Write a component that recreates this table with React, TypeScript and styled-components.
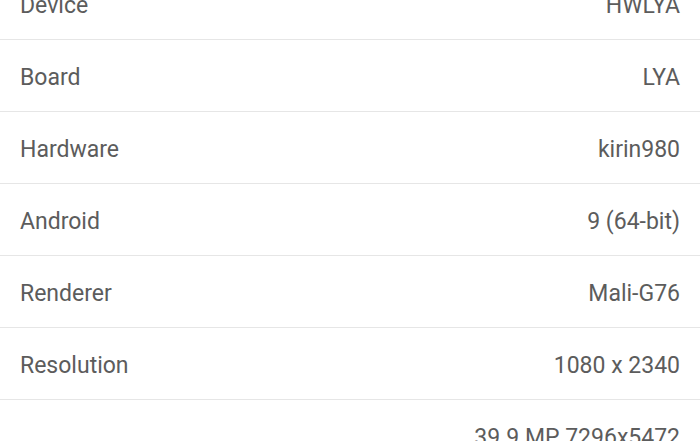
import React from "react";
import styled, { createGlobalStyle } from "styled-components";

const Global = createGlobalStyle`
  html, body { margin: 0; padding: 0; background: #ffffff; }
  body { font-family: Roboto, "Noto Sans", sans-serif; overflow: hidden; }
`;

const List = styled.div`
  display: flex;
  flex-direction: column;
  margin-top: -32px;
`;

const Row = styled.div`
  display: flex;
  justify-content: space-between;
  align-items: center;
  box-sizing: border-box;
  height: 72px;
  padding: 4px 20px 0;
  border-bottom: 1px solid #e6e6e6;
`;

const Label = styled.span`
  font-size: 23px;
  color: #5c5c5c;
`;

const Value = styled.span`
  font-size: 23px;
  color: #5c5c5c;
`;

const rows: [string, string][] = [
  ["Device", "HWLYA"],
  ["Board", "LYA"],
  ["Hardware", "kirin980"],
  ["Android", "9 (64-bit)"],
  ["Renderer", "Mali-G76"],
  ["Resolution", "1080 x 2340"],
  ["", "39.9 MP 7296x5472"],
];

export default function App() {
  return (
    <>
      <Global />
      <List>
        {rows.map(([l, v], i) => (
          <Row key={i}>
            <Label>{l}</Label>
            <Value>{v}</Value>
          </Row>
        ))}
      </List>
    </>
  );
}
